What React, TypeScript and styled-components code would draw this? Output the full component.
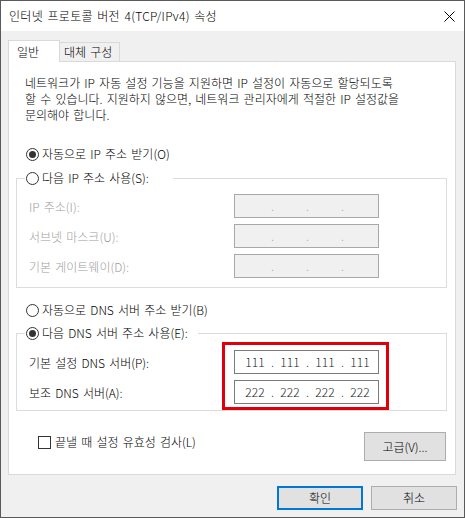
import React from "react"
import styled, { createGlobalStyle } from "styled-components"

const GlobalStyle = createGlobalStyle`
  html, body {
    margin: 0;
    padding: 0;
    background: #f0f0f0;
  }
  body {
    font-family: "Noto Sans CJK KR", "Noto Sans", sans-serif;
    font-size: 12px;
    font-weight: 300;
    word-spacing: 1.5px;
    color: #000;
  }
`

interface IpProps {
  octets?: string[]
  disabled?: boolean
}

const IpField = ({ octets = ["", "", "", ""], disabled }: IpProps) => (
  <IpBox $disabled={disabled}>
    {octets.map((o, i) => (
      <React.Fragment key={i}>
        {i > 0 && <Dot $disabled={disabled}>.</Dot>}
        <Octet>{o}</Octet>
      </React.Fragment>
    ))}
  </IpBox>
)

const RadioOption = ({ checked, label }: { checked?: boolean; label: string }) => (
  <OptionLabel>
    <RadioCircle>{checked && <RadioDot />}</RadioCircle>
    <span>{label}</span>
  </OptionLabel>
)

const App = () => {
  return (
    <>
      <GlobalStyle />
      <Window>
        <TitleBar>
          <Title>인터넷 프로토콜 버전 4(TCP/IPv4) 속성</Title>
          <CloseButton>
            <svg width="11" height="11" viewBox="0 0 11 11">
              <path d="M0.5 0.5 L10.5 10.5 M10.5 0.5 L0.5 10.5" stroke="#000" strokeWidth="1" />
            </svg>
          </CloseButton>
        </TitleBar>
        <Body>
          <TabRow>
            <Tab $active>일반</Tab>
            <Tab>대체 구성</Tab>
          </TabRow>
          <Panel>
            <Description>
              네트워크가 IP 자동 설정 기능을 지원하면 IP 설정이 자동으로 할당되도록
              <br />
              할 수 있습니다. 지원하지 않으면, 네트워크 관리자에게 적절한 IP 설정값을
              <br />
              문의해야 합니다.
            </Description>

            <RadioRow $top={23}>
              <RadioOption checked label="자동으로 IP 주소 받기(O)" />
            </RadioRow>

            <Group $top={8} $bottom={9}>
              <GroupLegend $gapRight={24}>
                <RadioOption label="다음 IP 주소 사용(S):" />
              </GroupLegend>
              <FieldRows $top={8}>
                <LabelColumn>
                  <FieldLabel $disabled>IP 주소(I):</FieldLabel>
                  <FieldLabel $disabled>서브넷 마스크(U):</FieldLabel>
                  <FieldLabel $disabled>기본 게이트웨이(D):</FieldLabel>
                </LabelColumn>
                <InputColumn>
                  <IpField disabled />
                  <IpField disabled />
                  <IpField disabled />
                </InputColumn>
              </FieldRows>
            </Group>

            <RadioRow $top={14}>
              <RadioOption label="자동으로 DNS 서버 주소 받기(B)" />
            </RadioRow>

            <Group $top={7} $bottom={6}>
              <GroupLegend $gapRight={10}>
                <RadioOption checked label="다음 DNS 서버 주소 사용(E):" />
              </GroupLegend>
              <FieldRows $top={9}>
                <LabelColumn>
                  <FieldLabel>기본 설정 DNS 서버(P):</FieldLabel>
                  <FieldLabel>보조 DNS 서버(A):</FieldLabel>
                </LabelColumn>
                <InputColumn>
                  <IpField octets={["111", "111", "111", "111"]} />
                  <IpField octets={["222", "222", "222", "222"]} />
                  <Highlight />
                </InputColumn>
              </FieldRows>
            </Group>

            <OptionsRow>
              <CheckLabel>
                <CheckBox />
                <span>끝낼 때 설정 유효성 검사(L)</span>
              </CheckLabel>
              <AdvancedButton>고급(V)...</AdvancedButton>
            </OptionsRow>
          </Panel>
          <Footer>
            <DialogButton $default>확인</DialogButton>
            <DialogButton>취소</DialogButton>
          </Footer>
        </Body>
      </Window>
    </>
  )
}

const Window = styled.div`
  box-sizing: border-box;
  width: 465px;
  height: 518px;
  border: 1px solid #5a5a5a;
  background: #f0f0f0;
  display: flex;
  flex-direction: column;
`

const TitleBar = styled.div`
  height: 30px;
  flex: none;
  background: #fff;
  display: flex;
  align-items: center;
  padding-left: 8px;
`

const Title = styled.div`
  flex: 1;
  line-height: 16px;
  letter-spacing: 0.3px;
`

const CloseButton = styled.div`
  width: 30px;
  height: 30px;
  display: flex;
  align-items: center;
  justify-content: center;
`

const Body = styled.div`
  flex: 1;
  display: flex;
  flex-direction: column;
  padding: 9px 8px 0 7px;
`

const TabRow = styled.div`
  display: flex;
  align-items: flex-start;
  height: 21px;
  position: relative;
  z-index: 1;
`

const Tab = styled.div<{ $active?: boolean }>`
  box-sizing: border-box;
  width: ${(p) => (p.$active ? 52 : 61)}px;
  height: ${(p) => (p.$active ? 22 : 19)}px;
  margin-top: ${(p) => (p.$active ? 0 : 2)}px;
  margin-left: ${(p) => (p.$active ? 0 : -1)}px;
  padding-left: ${(p) => (p.$active ? 8 : 4)}px;
  border: 1px solid #d9d9d9;
  border-bottom: none;
  background: ${(p) => (p.$active ? "#fff" : "#f0f0f0")};
  display: flex;
  align-items: center;
  line-height: 16px;
`

const Panel = styled.div`
  background: #fff;
  border: 1px solid #d9d9d9;
  padding: 13px 8px 13px 7px;
  display: flex;
  flex-direction: column;
`

const Description = styled.div`
  margin-left: 9px;
  line-height: 16px;
  white-space: nowrap;
`

const RadioRow = styled.div<{ $top: number }>`
  margin: ${(p) => p.$top}px 0 0 10px;
  height: 16px;
  display: flex;
`

const OptionLabel = styled.label`
  display: flex;
  align-items: center;
  gap: 3px;
  height: 16px;
  line-height: 16px;
  white-space: nowrap;
`

const RadioCircle = styled.span`
  box-sizing: border-box;
  width: 13px;
  height: 13px;
  border: 1px solid #333;
  border-radius: 50%;
  background: #fff;
  display: flex;
  align-items: center;
  justify-content: center;
`

const RadioDot = styled.span`
  width: 7px;
  height: 7px;
  border-radius: 50%;
  background: #333;
`

const Group = styled.fieldset<{ $top: number; $bottom: number }>`
  margin: ${(p) => p.$top}px 0 0 0;
  padding: 0 0 ${(p) => p.$bottom}px 0;
  border: 1px solid #dcdcdc;
  min-inline-size: auto;
`

const GroupLegend = styled.legend<{ $gapRight: number }>`
  margin-left: 8px;
  padding: 0 ${(p) => p.$gapRight}px 0 1px;
  height: 16px;
`

const FieldRows = styled.div<{ $top: number }>`
  display: flex;
  padding: ${(p) => p.$top}px 0 0 12px;
`

const LabelColumn = styled.div`
  width: 205px;
  display: flex;
  flex-direction: column;
  gap: 6px;
`

const FieldLabel = styled.div<{ $disabled?: boolean }>`
  height: 24px;
  display: flex;
  align-items: center;
  color: ${(p) => (p.$disabled ? "#a0a0a0" : "#000")};
`

const InputColumn = styled.div`
  position: relative;
  display: flex;
  flex-direction: column;
  gap: 6px;
`

const IpBox = styled.div<{ $disabled?: boolean }>`
  box-sizing: border-box;
  width: 145px;
  height: 24px;
  border: 1px solid ${(p) => (p.$disabled ? "#a8a8a8" : "#7a7a7a")};
  background: ${(p) => (p.$disabled ? "#f0f0f0" : "#fff")};
  display: flex;
  align-items: center;
  padding-left: 7px;
  color: #1a1a1a;
  line-height: 16px;
  word-spacing: 0;
`

const Octet = styled.span`
  width: 26px;
  text-align: center;
`

const Dot = styled.span<{ $disabled?: boolean }>`
  width: 9px;
  text-align: center;
  color: ${(p) => (p.$disabled ? "#a0a0a0" : "#1a1a1a")};
`

const Highlight = styled.div`
  position: absolute;
  inset: -8px -10px -6px -12px;
  border: 3px solid #e0000b;
  pointer-events: none;
`

const OptionsRow = styled.div`
  margin-top: 21px;
  display: flex;
  justify-content: space-between;
  align-items: flex-start;
`

const CheckLabel = styled.label`
  margin: 2px 0 0 22px;
  display: flex;
  align-items: center;
  gap: 4px;
  height: 16px;
  line-height: 16px;
`

const CheckBox = styled.span`
  box-sizing: border-box;
  width: 13px;
  height: 13px;
  border: 1px solid #333;
  background: #fff;
`

const ButtonBase = styled.button`
  box-sizing: border-box;
  font: inherit;
  color: #000;
  background: #e1e1e1;
  border: 1px solid #adadad;
  padding: 0;
  line-height: 16px;
`

const AdvancedButton = styled(ButtonBase)`
  width: 82px;
  height: 29px;
  margin-right: 1px;
`

const Footer = styled.div`
  display: flex;
  justify-content: flex-end;
  gap: 8px;
  padding-top: 11px;
  margin-right: -1px;
`

const DialogButton = styled(ButtonBase)<{ $default?: boolean }>`
  width: 86px;
  height: 24px;
  border: ${(p) => (p.$default ? "2px solid #0078d7" : "1px solid #adadad")};
`

export default App
